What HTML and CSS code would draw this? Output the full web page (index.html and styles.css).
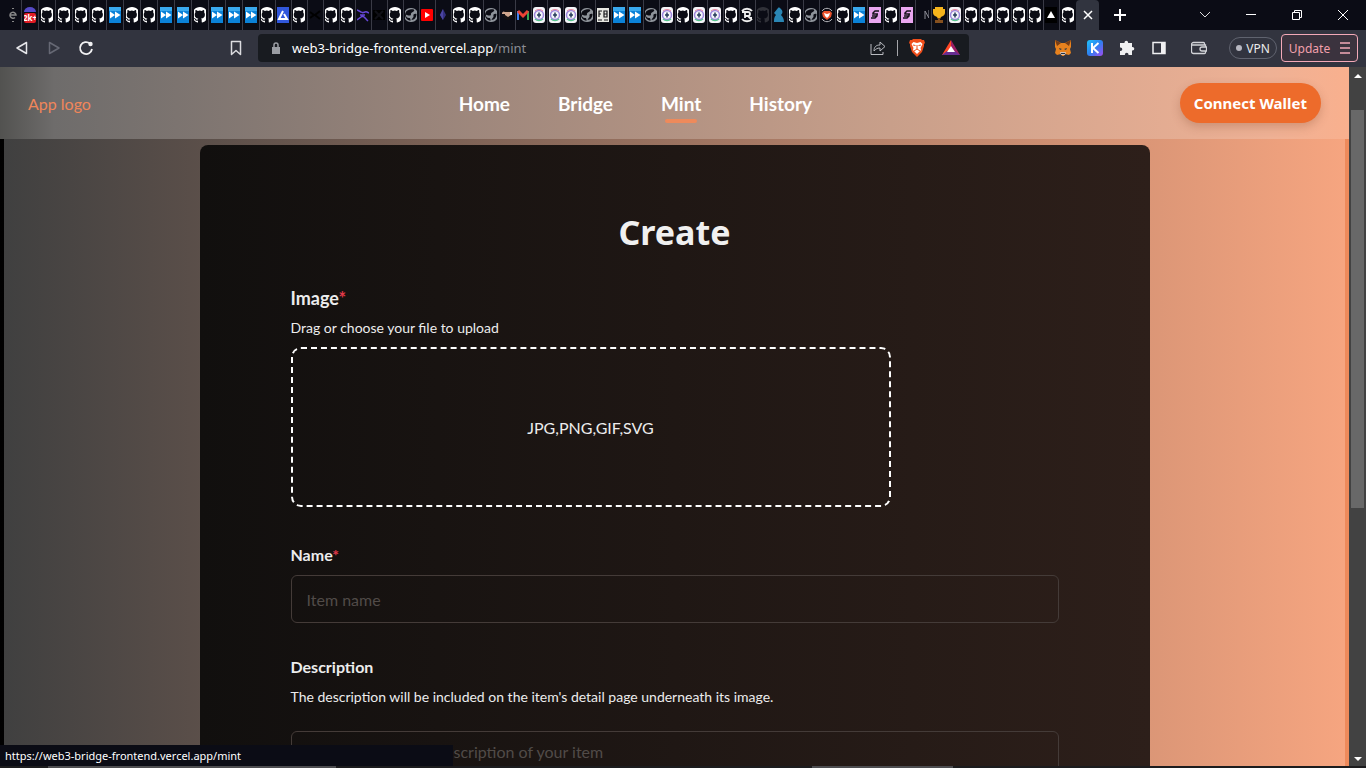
FILE: index.html
```html
<!DOCTYPE html>
<html lang="en">
<head>
<meta charset="utf-8">
<title>Mint</title>
<link rel="stylesheet" href="styles.css">
</head>
<body>
<svg class="sprite" aria-hidden="true">
  <symbol id="gh" viewBox="0 0 16 16" preserveAspectRatio="xMidYMid slice"><path fill="#fff" d="M8 0C3.6 0 0 3.6 0 8c0 3.5 2.3 6.500 5.500 7.600.4.1.5-.2.5-.4v-1.500c-2 .4-2.700-.5-2.900-1-.1-.2-.5-.9-.8-1.100-.3-.2-.7-.6 0-.6.600 0 1.100.600 1.200.800.700 1.200 1.900.9 2.300.7.100-.5.300-.9.500-1.100-1.800-.2-3.600-.9-3.600-4 0-.9.300-1.600.8-2.200-.1-.2-.4-1 .1-2.100 0 0 .7-.2 2.200.8a7.500 7.500 0 0 1 4 0c1.500-1 2.200-.8 2.200-.8.4 1.100.2 1.900.1 2.100.5.600.8 1.300.8 2.200 0 3.100-1.900 3.700-3.700 4 .3.200.5.700.5 1.500v2.200c0 .2.100.5.500.4C13.700 14.500 16 11.500 16 8c0-4.400-3.600-8-8-8z"/></symbol>
  <symbol id="ff" viewBox="0 0 12 16"><path fill="#0b82d8" d="M0 0h12v16H0z"/><path fill="#39a9ee" d="M0 0h12v4H0z"/><path fill="#fff" d="M1 4.500 6 8l-5 3.500zM6 4.500 11.500 8 6 11.500z"/></symbol>
  <symbol id="globe" viewBox="0 0 12 16"><path d="M6 1a7 7 0 0 1 6 3v8a7 7 0 0 1-6 3 7 7 0 0 1-6-3V4a7 7 0 0 1 6-3z" fill="#8d9299"/><path fill="#0c0c14" d="M5 2.500c3-.5 5 0 4 1.500S6.500 5 6 6.500 7 8 5 8.500 1.500 7 1 8s1 3 3 3 1 2 2 2.500C3 14 0 11 0 8s2-5 5-5.500zM11.500 7c-2-.5-3.500.5-3 2S7 11 6.500 13c3 0 5-3 5-6z"/></symbol>
  <symbol id="ring" viewBox="0 0 12 16"><rect width="12" height="16" rx="3" fill="#f4f4f8"/><circle cx="6" cy="8" r="4.500" fill="none" stroke="#9c86dc" stroke-width="1.500"/><path d="M2 12a6 6 0 0 0 8 0" stroke="#55c58b" stroke-width="1.500" fill="none"/><path d="M2 4a6 6 0 0 1 8 0" stroke="#e88aa0" fill="none"/><path d="M6 5.500v5M4 8h4" stroke="#273b5c" stroke-width="1.500"/></symbol>
  <symbol id="pink" viewBox="0 0 12 16"><path fill="#e9a6f0" d="M0 0h12v16H0z"/><path d="M10 4H6L4 6v1h4v2l-2 2H2M9 7H5M8 9H3" fill="none" stroke="#17131c" stroke-width="1.500"/></symbol>
</svg>

<div class="browser">
  <header class="tabstrip">
    <nav class="tabs" aria-label="Open tabs">
      <button class="tab"><svg viewBox="0 0 12 16"><path d="M3 8h6a3 3 0 1 0-1 2.500" fill="none" stroke="#888" stroke-width="1.500"/><path d="M5 1h2v1H5zM5 14h2v1H5z" fill="#888"/></svg></button>
      <button class="tab"><svg viewBox="0 0 12 16"><path d="M0 5a6 5 0 0 1 12 0z" fill="#5549c6"/><rect y="6" width="12" height="10" rx="2" fill="#e01b24"/><text x="6" y="14" class="badge">2k+</text></svg></button>
      <button class="tab"><svg><use href="#gh"/></svg></button>
      <button class="tab"><svg><use href="#gh"/></svg></button>
      <button class="tab"><svg><use href="#gh"/></svg></button>
      <button class="tab"><svg><use href="#gh"/></svg></button>
      <button class="tab"><svg><use href="#ff"/></svg></button>
      <button class="tab"><svg><use href="#gh"/></svg></button>
      <button class="tab"><svg><use href="#gh"/></svg></button>
      <button class="tab"><svg><use href="#ff"/></svg></button>
      <button class="tab"><svg><use href="#ff"/></svg></button>
      <button class="tab"><svg><use href="#gh"/></svg></button>
      <button class="tab"><svg><use href="#ff"/></svg></button>
      <button class="tab"><svg><use href="#ff"/></svg></button>
      <button class="tab"><svg><use href="#ff"/></svg></button>
      <button class="tab"><svg><use href="#gh"/></svg></button>
      <button class="tab"><svg viewBox="0 0 12 16"><path fill="#3157dc" d="M0 0h12v16H0z"/><path d="M6 4 2 12h8L7 7" fill="none" stroke="#fff" stroke-width="2"/></svg></button>
      <button class="tab"><svg><use href="#gh"/></svg></button>
      <button class="tab"><svg viewBox="0 0 12 16"><path d="M1 5l4 3-4 3M11 4 6 8l5 4" fill="none" stroke="#000" stroke-width="2"/></svg></button>
      <button class="tab"><svg><use href="#gh"/></svg></button>
      <button class="tab"><svg><use href="#gh"/></svg></button>
      <button class="tab"><svg viewBox="0 0 12 16"><path d="M0 3 4 5c3 2 3-1 6 0l2 1M0 13l4-3c2-2 4 1 7 4M3 8h5" fill="none" stroke="#6647d8" stroke-width="1.500"/></svg></button>
      <button class="tab"><svg viewBox="0 0 12 16"><path d="M0 3h12v10H0z" fill="#000"/><path d="m2 4 8 8M10 4l-8 8" stroke="#101016" stroke-width="2"/></svg></button>
      <button class="tab"><svg><use href="#gh"/></svg></button>
      <button class="tab"><svg><use href="#globe"/></svg></button>
      <button class="tab"><svg viewBox="0 0 12 16"><rect y="2" width="12" height="12" rx="1" fill="#f00"/><path d="M4 5v6l5-3z" fill="#fff"/></svg></button>
      <button class="tab"><svg viewBox="0 0 12 16"><path d="m6 2 3 6-3 5-3-5z" fill="#343080"/><path d="M6 2v11L3 8z" fill="#4b45a2"/></svg></button>
      <button class="tab"><svg><use href="#gh"/></svg></button>
      <button class="tab"><svg><use href="#gh"/></svg></button>
      <button class="tab"><svg><use href="#globe"/></svg></button>
      <button class="tab"><svg viewBox="0 0 12 16"><circle cx="7" cy="8" r="5" fill="#141010"/><path d="M1 6a2 2 0 0 1 3-1v2H1zM4 5h5l1 3-3 2-3-2z" fill="#cfa58c"/><path d="M9 5h2v3H9z" fill="#eee"/></svg></button>
      <button class="tab"><svg viewBox="0 0 12 16"><path d="M1 13V4" stroke="#4285f4" stroke-width="2"/><path d="M11 13V4" stroke="#34a853" stroke-width="2"/><path d="m1 4 5 5 5-5" fill="none" stroke="#ea4335" stroke-width="3"/></svg></button>
      <button class="tab"><svg><use href="#ring"/></svg></button>
      <button class="tab"><svg><use href="#ring"/></svg></button>
      <button class="tab"><svg><use href="#ring"/></svg></button>
      <button class="tab"><svg><use href="#globe"/></svg></button>
      <button class="tab"><svg viewBox="0 0 12 16"><path fill="#e7e7e2" d="M0 1h12v14H0z"/><path d="M2 10V4h3M2 7h2M7 4h3v6H7zM7 7h3M1 13h4M7 13h4" fill="none" stroke="#16161a" stroke-width="1.200"/></svg></button>
      <button class="tab"><svg><use href="#ff"/></svg></button>
      <button class="tab"><svg><use href="#ff"/></svg></button>
      <button class="tab"><svg><use href="#globe"/></svg></button>
      <button class="tab"><svg><use href="#ring"/></svg></button>
      <button class="tab"><svg><use href="#gh"/></svg></button>
      <button class="tab"><svg><use href="#ring"/></svg></button>
      <button class="tab"><svg><use href="#ring"/></svg></button>
      <button class="tab"><svg><use href="#gh"/></svg></button>
      <button class="tab"><svg viewBox="0 0 12 16"><path d="M1 4a6 5 0 0 1 10 0M1 12a6 5 0 0 0 10 0" fill="none" stroke="#eee" stroke-width="2"/><path d="M1 5h6a1.800 1.800 0 0 1 0 4H4m0-4v6M7 9l2 2h2" fill="none" stroke="#eee" stroke-width="1.800"/></svg></button>
      <button class="tab dim"><svg><use href="#gh"/></svg></button>
      <button class="tab"><svg viewBox="0 0 12 16"><path d="M5 1c1-1 2 0 3 1 2 2 2 4 0 6 2 2 3 4 3 7H1c0-3 0-5 2-7L1 6z" fill="#2a86b4"/></svg></button>
      <button class="tab"><svg><use href="#gh"/></svg></button>
      <button class="tab"><svg><use href="#globe"/></svg></button>
      <button class="tab"><svg viewBox="0 0 12 16"><path d="M1 4a6 6 0 0 1 10 0M1 12a6 6 0 0 0 10 0" fill="none" stroke="#b5b5ba"/><path d="M3 4h6l2 2-1 4-4 3-4-3-1-4z" fill="#e8512a"/><path d="m3 6 3 1 3-1-1 3-2 2-2-2z" fill="#fff"/></svg></button>
      <button class="tab"><svg><use href="#gh"/></svg></button>
      <button class="tab"><svg><use href="#ff"/></svg></button>
      <button class="tab"><svg><use href="#pink"/></svg></button>
      <button class="tab"><svg><use href="#gh"/></svg></button>
      <button class="tab"><svg><use href="#pink"/></svg></button>
      <button class="tab"><svg viewBox="0 0 12 16"><path d="M8 12V4l4 7V3" fill="none" stroke="#8d8d96"/></svg></button>
      <button class="tab"><svg viewBox="0 0 12 16"><path d="M2 0h8v2h2v4c0 2-2 3-4 4l-1 2H5l-1-2C2 9 0 8 0 6V2h2z" fill="#f5b41c"/><path d="M5 11h2v2h3v3H2v-3h3z" fill="#85501f"/></svg></button>
      <button class="tab"><svg><use href="#ring"/></svg></button>
      <button class="tab"><svg><use href="#gh"/></svg></button>
      <button class="tab"><svg><use href="#gh"/></svg></button>
      <button class="tab"><svg><use href="#gh"/></svg></button>
      <button class="tab"><svg><use href="#gh"/></svg></button>
      <button class="tab"><svg><use href="#gh"/></svg></button>
      <button class="tab"><svg viewBox="0 0 12 16"><path fill="#000" d="M0 0h12v16H0z"/><path d="m6 4 4 7H2z" fill="#fff"/></svg></button>
      <button class="tab"><svg><use href="#gh"/></svg></button>
    </nav>
    <button class="tab-active" aria-label="Close tab"><svg width="10" height="10" viewBox="0 0 10 10"><path d="m1 1 8 8M9 1 1 9" stroke="#fff" stroke-width="1.500"/></svg></button>
    <button class="new-tab" aria-label="New tab"><svg width="12" height="12" viewBox="0 0 12 12"><path d="M6 0v12M0 6h12" stroke="#fff" stroke-width="2"/></svg></button>
    <div class="window-controls">
      <button aria-label="Search tabs"><svg viewBox="0 0 12 12"><path d="m1 3 5 5 5-5" fill="none" stroke="#ddd"/></svg></button>
      <button aria-label="Minimize"><svg viewBox="0 0 12 12"><path d="M1 5.500h10" stroke="#fff"/></svg></button>
      <button aria-label="Restore"><svg viewBox="0 0 12 12"><path d="M1.500 3.500h7v7h-7zM3.500 3.500v-2h7v7h-2" fill="none" stroke="#fff"/></svg></button>
      <button aria-label="Close"><svg viewBox="0 0 12 12"><path d="m1 1 10 10M11 1 1 11" stroke="#fff"/></svg></button>
    </div>
  </header>

  <div class="toolbar">
    <div class="nav-buttons">
      <button aria-label="Back"><svg viewBox="0 0 16 16"><path d="M12.500 2.500v11L3 8z" fill="none" stroke="#e6e6ea" stroke-width="1.500" stroke-linejoin="round"/></svg></button>
      <button aria-label="Forward"><svg viewBox="0 0 16 16"><path d="M3.500 2.500v11L13 8z" fill="none" stroke="#666874" stroke-width="1.500" stroke-linejoin="round"/></svg></button>
      <button aria-label="Reload"><svg viewBox="0 0 16 16"><path d="M12 3.500A6 6 0 1 0 14 9" fill="none" stroke="#f0f0f2" stroke-width="1.800"/><circle cx="12.500" cy="4" r="2.200" fill="#f0f0f2"/></svg></button>
    </div>
    <button class="bookmark" aria-label="Bookmark"><svg viewBox="0 0 16 16"><path d="M3.500 1.500h9v13L8 10.500l-4.500 4z" fill="none" stroke="#dcdce0" stroke-width="1.500" stroke-linejoin="round"/></svg></button>
    <div class="address">
      <svg class="lock" viewBox="0 0 10 12"><path d="M1 5h8v7H1z" fill="#9a9da3"/><path d="M3 5V3a2 2 0 0 1 4 0v2" fill="none" stroke="#9a9da3" stroke-width="1.500"/></svg>
      <span class="url">web3-bridge-frontend.vercel.app<span class="url-path">/mint</span></span>
      <button aria-label="Share"><svg viewBox="0 0 16 16"><path d="M1 4v10.500h12V12" fill="none" stroke="#b9bbc0"/><path d="M4 11c0-4 2-6 6-6V2l5 4.500-5 4.500V8c-3 0-4 1-6 3z" fill="none" stroke="#b9bbc0" stroke-linejoin="round"/></svg></button>
      <span class="divider"></span>
      <button aria-label="Brave Shields"><svg class="wide" viewBox="0 0 18 18"><path d="M5 0h8l1 1h2l1 3-1 1v2l-2 6-5 5-5-5-2-6V5L1 4l1-3h2z" fill="#f04e1a"/><path d="m3.500 5 2-2L9 4l3.500-1 2 2-2 4 .5 2-4 4-4-4 .5-2z" fill="#fff"/><path d="m5 6 2.500.5M13 6l-2.500.5M9 6v4M6 12l3-2 3 2" stroke="#f04e1a" fill="none"/></svg></button>
      <button aria-label="Rewards"><svg class="wide" viewBox="0 0 18 18"><path d="M9 1 0 16h9z" fill="#ff4724"/><path d="m9 1 9 15H9z" fill="#9e1f63"/><path d="M0 16h18l-5-4H5z" fill="#662d91"/><path d="m9 7 4 6H5z" fill="#fff"/></svg></button>
    </div>
    <div class="extensions">
      <button aria-label="MetaMask"><svg viewBox="0 0 16 16"><path d="m0 0 6 3h4l6-3v7l-1 2 1 4-2 2-4-1-1 2H7l-1-2-4 1-2-2 1-4-1-2z" fill="#e8821e"/><path d="m0 0 6 3-4 3zM16 0l-6 3 4 3z" fill="#763d16"/><path d="m4 8 3 1-2 1zM12 8 9 9l2 1z" fill="#233447"/><path d="M5 12h6l-1 3H6z" fill="#d5bfb2"/><path d="M6 13h4v1H6z" fill="#233447"/></svg></button>
      <button aria-label="Keplr"><svg viewBox="0 0 16 16"><defs><linearGradient id="kg" x2="1" y2="1"><stop stop-color="#1fc4fa"/><stop offset=".5" stop-color="#2d80f0"/><stop offset="1" stop-color="#a14bf0"/></linearGradient></defs><rect width="16" height="16" rx="3" fill="url(#kg)"/><path d="M5 3v10M11.500 3 6 8l5.500 5" fill="none" stroke="#fff" stroke-width="2"/></svg></button>
      <button aria-label="Extensions"><svg viewBox="0 0 16 16"><path d="M1 3h4.500v-.500a1.800 1.800 0 0 1 3.600 0V3H13v4h.500a1.800 1.800 0 0 1 0 3.600H13V15H9.500v-.500a1.800 1.800 0 0 0-3.600 0v.500H1v-4h.500a1.800 1.800 0 0 0 0-3.600H1z" fill="#f0f0f2"/></svg></button>
      <button aria-label="Side panel"><svg viewBox="0 0 16 16"><path d="M2 2.500h12v11H2z" fill="none" stroke="#f0f0f2" stroke-width="1.500"/><path d="M10 2h4v12h-4z" fill="#f0f0f2"/></svg></button>
      <button class="wallet" aria-label="Wallet"><svg viewBox="0 0 16 16"><path d="M13.500 5V3.500a1 1 0 0 0-1-1H2.500a2 2 0 0 0-2 2v7a2 2 0 0 0 2 2h11a1 1 0 0 0 1-1V11M1 5h13.500v2m1 0H11a2 2 0 0 0 0 4h4.500z" fill="none" stroke="#d2d3d8" stroke-width="1.300"/></svg></button>
    </div>
    <button class="vpn"><span class="dot"></span>VPN</button>
    <button class="update">Update <svg width="10" height="12" viewBox="0 0 10 12"><path d="M0 1h10M0 6h10M0 11h10" stroke="#f3a9b8" stroke-width="1.500"/></svg></button>
  </div>

  <div class="viewport">
    <div class="page">
      <header class="site-header">
        <a class="logo" href="#">App logo</a>
        <nav class="site-nav">
          <a href="#">Home</a>
          <a href="#">Bridge</a>
          <a class="current" href="#">Mint</a>
          <a href="#">History</a>
        </nav>
        <button class="connect">Connect Wallet</button>
      </header>
      <main class="site-main">
        <form class="card">
          <h1>Create</h1>
          <label class="label-large" for="file">Image<span class="required">*</span></label>
          <p class="hint">Drag or choose your file to upload</p>
          <button type="button" class="dropzone" id="file">JPG,PNG,GIF,SVG</button>
          <label for="name">Name<span class="required">*</span></label>
          <input id="name" type="text" placeholder="Item name">
          <label for="description">Description</label>
          <p class="hint">The description will be included on the item's detail page underneath its image.</p>
          <textarea id="description" placeholder="Provide a detailed description of your item"></textarea>
        </form>
      </main>
    </div>
    <div class="scrollbar" aria-hidden="true">
      <svg viewBox="0 0 8 4"><path d="M0 4h8L4 0z" fill="#fff"/></svg>
      <div class="track"><div class="thumb"></div></div>
      <svg viewBox="0 0 8 4"><path d="M0 0h8L4 4z" fill="#fff"/></svg>
    </div>
    <div class="status">https://web3-bridge-frontend.vercel.app/mint</div>
  </div>
  <div class="taskbar"><span class="task task-wide"></span><span class="task"></span></div>
</div>
</body>
</html>
```
FILE: styles.css
```css
* { box-sizing: border-box; }
body { margin: 0; font-family: Lato, sans-serif; color: #ececec; }
button { border: 0; padding: 0; background: none; color: inherit; font: inherit; display: flex; align-items: center; justify-content: center; }
a { color: inherit; text-decoration: none; }
svg { display: block; flex: none; }
.sprite { position: absolute; width: 0; height: 0; }
.browser { height: 100vh; display: flex; flex-direction: column; overflow: hidden; background: #0b0c15; }

.tabstrip { height: 30px; flex: none; display: flex; align-items: stretch; padding-left: 5px; }
.tabs { display: flex; }
.tab { width: 16px; border-right: 1px solid #3a3b46; padding-right: 1px; }
.tab:nth-child(-n+15) { width: 17px; }
.tab:last-child { border: 0; }
.tab svg { width: 12px; height: 16px; }
.dim svg { opacity: .15; }
.badge { font: 700 8px "Open Sans", sans-serif; fill: #fff; text-anchor: middle; }
.tab-active { width: 23px; background: #31343f; border-radius: 4px 4px 0 0; }
.new-tab { width: 42px; }
.window-controls { margin-left: auto; display: flex; }
.window-controls button { width: 46px; }
.window-controls svg { width: 12px; height: 12px; }

.toolbar { height: 37px; flex: none; display: flex; align-items: center; background: #32343f; padding: 0 8px 1px 6px; font-family: "Noto Sans", sans-serif; }
.toolbar button svg { width: 16px; height: 16px; }
.nav-buttons { display: flex; }
.nav-buttons button { width: 32px; }
.bookmark { margin-left: 126px; width: 16px; }
.address { flex: 0 1 711px; height: 28px; margin-left: 14px; padding: 0 9px 0 13px; display: flex; align-items: center; background: #181b20; border-radius: 4px; font-size: 13px; }
.lock { width: 10px; height: 12px; margin-right: 11px; }
.url { flex: 1; color: #fff; }
.url-path { color: #8b8e94; }
.divider { width: 1px; height: 16px; background: #a5a6aa; margin: 0 10px 0 11px; }
.address button + button { margin-left: 16px; }
.toolbar button svg.wide { width: 18px; height: 18px; }
.extensions { margin-left: auto; display: flex; gap: 16px; padding-right: 22px; }
.wallet { margin-left: 8px; }
.vpn { height: 22px; width: 48px; gap: 4px; border: 1px solid #60636f; border-radius: 11px; font-size: 12px; }
.dot { width: 6px; height: 6px; border-radius: 50%; background: #b7b7c1; }
.toolbar .update { height: 28px; width: 77px; margin-left: 4px; gap: 10px; border: 1px solid #f3a9b8; border-radius: 4px; background: #3b333e; color: #f3a0ac; font-size: 12px; }
.toolbar .update svg { width: 10px; height: 12px; }

.viewport { flex: 1; min-height: 0; display: flex; position: relative; }
.page { flex: 1; min-width: 0; overflow: hidden; display: flex; flex-direction: column; background: linear-gradient(90deg, #000, #ee8a5b); }
.site-header { height: 72px; flex: none; display: flex; align-items: center; justify-content: space-between; padding: 0 28px; background: linear-gradient(90deg, #525250, #6e6c6b 4%, #9e877c 35%, #c89f8a 66%, #eeb195 94%, #f9b08e); }
.logo { color: #f0865a; font-size: 16px; }
.site-nav { display: flex; gap: 48px; font-size: 19px; font-weight: 700; color: #fff; }
.site-nav a { position: relative; }
.current::after { content: ""; position: absolute; left: 4px; right: 4px; bottom: -8px; height: 4px; border-radius: 2px; background: #ee8a5b; }
.connect { height: 40px; padding: 0 14px; border-radius: 20px; background: #ed6b2b; color: #fff; font: 700 15px "Noto Sans", sans-serif; box-shadow: 0 4px 10px rgba(120, 60, 30, .25); }
.site-main { flex: none; margin: 0 4px; padding-top: 6px; background: linear-gradient(90deg, #404040, #f6a580); }
.card { max-width: 950px; height: 900px; margin: 0 auto; padding: 62px 91px; border-radius: 8px; background: linear-gradient(90deg, #110f0e, #2d1f1a); display: flex; flex-direction: column; align-items: flex-start; }
h1 { align-self: center; margin: 0 0 29px; font: 700 34px/50px "Noto Sans", sans-serif; color: #f0f0f0; }
label { font-size: 16px; line-height: 24px; font-weight: 700; }
.label-large { font-size: 18px; }
.required { color: #e2394a; }
.hint { margin: 8px 0; font-size: 14px; line-height: 20px; }
.dropzone { width: 100%; max-width: 600px; height: 160px; margin: 1px 0 36px; border: 2px dashed #fff; border-radius: 10px; font-size: 16px; }
input, textarea { width: 100%; padding: 0 15px; border: 1px solid #443b38; border-radius: 6px; background: none; color: #fff; font: 16px Lato, sans-serif; outline: 0; }
input { height: 48px; margin: 8px 0 32px; }
textarea { height: 120px; margin-top: 16px; padding-top: 10px; resize: none; }
::placeholder { color: #514b48; opacity: 1; }
.scrollbar { width: 17px; flex: none; background: #424242; display: flex; flex-direction: column; align-items: center; padding: 7px 0 5px; }
.scrollbar svg { width: 8px; height: 4px; }
.track { flex: 1; width: 13px; padding-top: 32px; }
.thumb { height: 61%; min-height: 398px; background: #686868; }
.status { position: absolute; left: 0; bottom: 0; width: 453px; height: 21px; padding-left: 5px; background: #0b0c15; color: #fff; font: 11px/21px "Noto Sans", sans-serif; }
.taskbar { height: 2px; flex: none; display: flex; justify-content: space-between; padding: 0 413px 0 48px; background: #1c1c1e; }
.task { width: 141px; background: #4d4d50; }
.task-wide { width: 288px; }
```
